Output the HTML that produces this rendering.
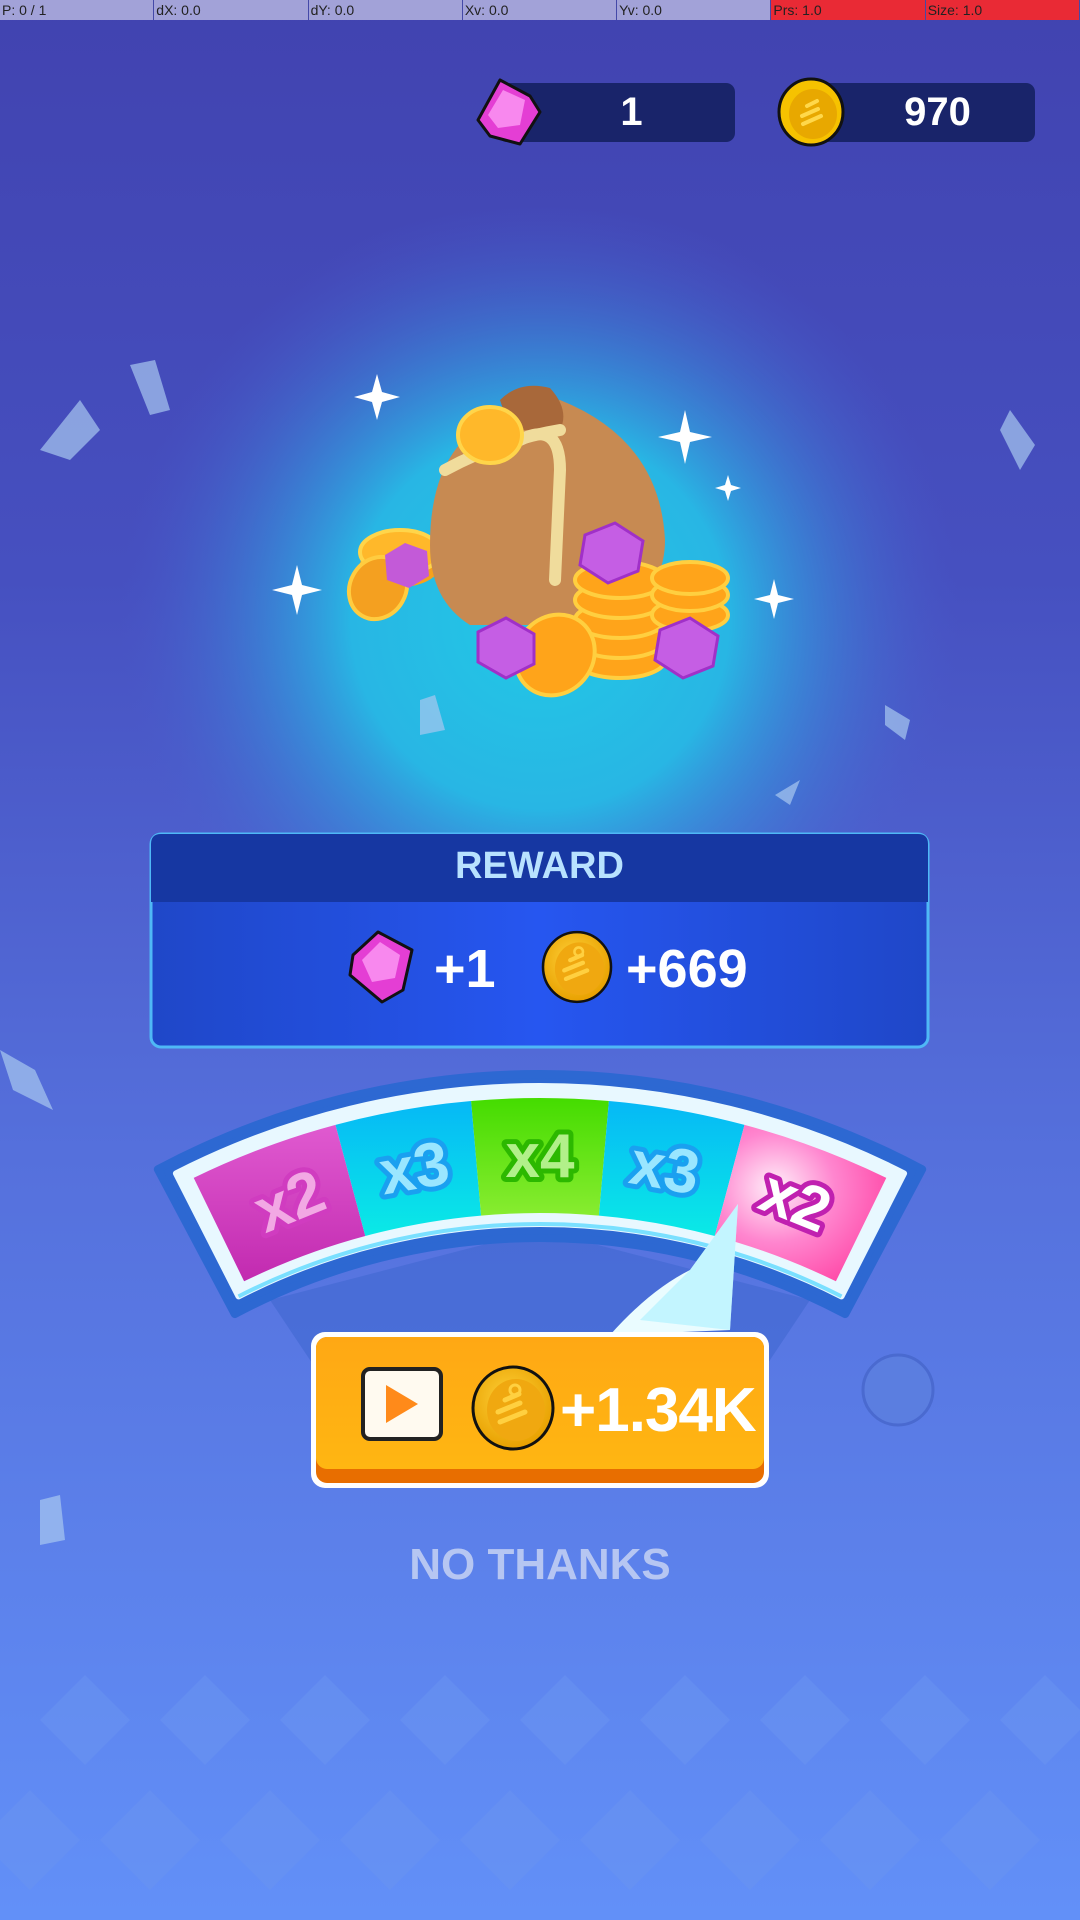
<!DOCTYPE html>
<html><head><meta charset="utf-8"><style>
*{margin:0;padding:0;box-sizing:border-box}
body{width:1080px;height:1920px;overflow:hidden;font-family:"Liberation Sans",sans-serif;background:linear-gradient(180deg,#4143b0 0%,#4650c0 30%,#5570dc 60%,#6290f8 100%);position:relative}
.abs{position:absolute}
.topbar{top:0;left:0;width:1080px;height:20px;display:flex;font-size:14px;color:#222}
.topbar div{flex:1;background:#a2a2d8;border-right:1px solid #4449a8;padding-left:2px;line-height:20px;font-family:"Liberation Sans Narrow","Liberation Sans",sans-serif}
.topbar div.r{background:#e92a35}
.cnt{background:#19246a;border-radius:9px;height:59px;top:83px;color:#fff;font-weight:bold;font-size:40px;line-height:59px;text-align:center}
</style></head><body>
<svg class="abs" style="left:0;top:0" width="1080" height="1920" viewBox="0 0 1080 1920">
<defs>
<radialGradient id="glow" cx="540" cy="620" r="420" gradientUnits="userSpaceOnUse">
<stop offset="0" stop-color="#22c8e6"/><stop offset=".45" stop-color="#28b6e4"/><stop offset="1" stop-color="#4a5cd0" stop-opacity="0"/></radialGradient>
<linearGradient id="panel" x1="0" y1="0" x2="1" y2="0"><stop offset="0" stop-color="#1f47c8"/><stop offset=".5" stop-color="#2656f0"/><stop offset="1" stop-color="#1f47c8"/></linearGradient>
<linearGradient id="btn" x1="0" y1="0" x2="0" y2="1"><stop offset="0" stop-color="#ffa814"/><stop offset="1" stop-color="#ffb612"/></linearGradient>
<radialGradient id="coin" cx=".45" cy=".4" r=".6"><stop offset="0" stop-color="#ffd23a"/><stop offset="1" stop-color="#e8a000"/></radialGradient>
<linearGradient id="pinkL" x1="0" y1="0" x2="0" y2="1"><stop offset="0" stop-color="#e05ad0"/><stop offset="1" stop-color="#c22ab0"/></linearGradient>
<radialGradient id="pinkR" cx=".35" cy=".4" r=".7"><stop offset="0" stop-color="#fff0fa"/><stop offset=".5" stop-color="#ff86cf"/><stop offset="1" stop-color="#ff4aa8"/></radialGradient>
<linearGradient id="cy" x1="0" y1="0" x2="0" y2="1"><stop offset="0" stop-color="#06b8f6"/><stop offset="1" stop-color="#0aeae6"/></linearGradient>
<linearGradient id="gr" x1="0" y1="0" x2="0" y2="1"><stop offset="0" stop-color="#44dc00"/><stop offset="1" stop-color="#88ec30"/></linearGradient>
</defs>
<circle cx="540" cy="600" r="430" fill="url(#glow)"/>
<g fill="#6a94f0" opacity=".55">
<path d="M40 1720l45-45 45 45-45 45z M160 1720l45-45 45 45-45 45z M280 1720l45-45 45 45-45 45z M400 1720l45-45 45 45-45 45z M520 1720l45-45 45 45-45 45z M640 1720l45-45 45 45-45 45z M760 1720l45-45 45 45-45 45z M880 1720l45-45 45 45-45 45z M1000 1720l45-45 45 45-45 45z"/>
<path d="M100 1840l50-50 50 50-50 50z M220 1840l50-50 50 50-50 50z M340 1840l50-50 50 50-50 50z M460 1840l50-50 50 50-50 50z M580 1840l50-50 50 50-50 50z M700 1840l50-50 50 50-50 50z M820 1840l50-50 50 50-50 50z M940 1840l50-50 50 50-50 50z M-20 1840l50-50 50 50-50 50z"/>
</g>
<g fill="#a8c8f0" opacity=".7">
<path d="M40 450l40-50 20 30-30 30z"/><path d="M130 365l25-5 15 50-20 5z"/><path d="M1010 410l25 35-15 25-20-40z"/><path d="M0 1050l35 20 18 40-40-20z"/><path d="M420 700l15-5 10 35-25 5z"/><path d="M885 705l25 15-5 20-20-15z"/><path d="M800 780l-25 15 15 10z"/><path d="M40 1500l20-5 5 45-25 5z"/>
</g>
<g fill="#fff">
<path d="M372 392l5 -18 5 18 18 5-18 5-5 18-5-18-18-5z"/>
<path d="M680 432l5 -22 5 22 22 5-22 5-5 22-5-22-22-5z"/>
<path d="M292 585l5 -20 5 20 20 5-20 5-5 20-5-20-20-5z"/>
<path d="M770 595l4 -16 4 16 16 4-16 4-4 16-4-16-16-4z"/>
<path d="M725 485l3 -10 3 10 10 3-10 3-3 10-3-10-10-3z"/>
</g>
<!-- bag -->
<ellipse cx="400" cy="565" rx="40" ry="22" fill="#f6a21c"/>
<ellipse cx="400" cy="552" rx="40" ry="22" fill="#ffb82a" stroke="#ffd54a" stroke-width="4"/>
<path d="M430 545 Q430 430 520 410 L560 400 Q660 440 665 540 Q665 600 600 625 L470 625 Q430 600 430 545z" fill="#c78a52"/>
<path d="M500 400 Q520 380 550 388 Q570 410 560 430 L510 430z" fill="#a8683a"/>
<path d="M520 440 Q560 420 560 470 L555 580" stroke="#f0dc9c" stroke-width="12" fill="none" stroke-linecap="round"/>
<path d="M445 470 Q500 440 560 430" stroke="#f0dc9c" stroke-width="12" fill="none" stroke-linecap="round"/>
<ellipse cx="490" cy="435" rx="32" ry="28" fill="#ffb82a" stroke="#ffd54a" stroke-width="4"/>
<ellipse cx="378" cy="588" rx="28" ry="32" fill="#f4a020" stroke="#ffcc40" stroke-width="4" transform="rotate(30 378 588)"/>
<path d="M385 555l20-12 22 8 2 25-20 12-22-8z" fill="#c35ad8"/>
<g fill="#ffa41a" stroke="#ffcf40" stroke-width="4">
<ellipse cx="620" cy="660" rx="45" ry="18"/><ellipse cx="620" cy="640" rx="45" ry="18"/><ellipse cx="620" cy="620" rx="45" ry="18"/><ellipse cx="620" cy="600" rx="45" ry="18"/><ellipse cx="620" cy="580" rx="45" ry="18"/>
<ellipse cx="690" cy="615" rx="38" ry="16"/><ellipse cx="690" cy="595" rx="38" ry="16"/><ellipse cx="690" cy="578" rx="38" ry="16"/>
</g>
<ellipse cx="555" cy="655" rx="38" ry="42" fill="#ffa41a" stroke="#ffcf40" stroke-width="4" transform="rotate(40 555 655)"/>
<g fill="#c55ee4" stroke="#a030c8" stroke-width="3">
<path d="M585 535l30-12 28 18-5 30-30 12-28-18z"/>
<path d="M478 632l28-14 28 16 0 30-28 14-28-16z"/>
<path d="M660 630l30-12 28 18-5 30-30 12-28-18z"/>
</g>
<!-- reward panel -->
<rect x="151" y="834" width="777" height="213" rx="10" fill="url(#panel)" stroke="#4fb8f6" stroke-width="3"/>
<path d="M161 834 H918 Q928 834 928 844 V902 H151 V844 Q151 834 161 834z" fill="#1637a2"/>
<!-- arc shadow -->
<path d="M270 1300 L540 1230 L810 1300 L690 1480 L390 1480z" fill="#3f68d0" opacity=".6"/>
<!-- arc -->
<path d="M157.8 1169.3 A814 814 0 0 1 922.2 1169.3 L845.2 1314.1 A650 650 0 0 0 234.8 1314.1 Z" fill="#2d68d2" stroke="#2d68d2" stroke-width="8" stroke-linejoin="round"/>
<path d="M175.9 1173.4 A802 802 0 0 1 904.1 1173.4 L841.5 1296.4 A664 664 0 0 0 238.5 1296.4 Z" fill="#e8f8ff" stroke="#e8f8ff" stroke-width="6" stroke-linejoin="round"/>
<path d="M193.7 1177.9 A790 790 0 0 1 335.5 1124.9 L365.3 1236 A675 675 0 0 0 244.1 1281.3Z" fill="url(#pinkL)"/>
<path d="M335.5 1124.9 A790 790 0 0 1 471.1 1101 L481.1 1215.6 A675 675 0 0 0 365.3 1236Z" fill="url(#cy)"/>
<path d="M471.1 1101 A790 790 0 0 1 608.9 1101 L598.9 1215.6 A675 675 0 0 0 481.1 1215.6Z" fill="url(#gr)"/>
<path d="M608.9 1101 A790 790 0 0 1 744.5 1124.9 L714.7 1236 A675 675 0 0 0 598.9 1215.6Z" fill="url(#cy)"/>
<path d="M744.5 1124.9 A790 790 0 0 1 886.3 1177.9 L835.9 1281.3 A675 675 0 0 0 714.7 1236Z" fill="url(#pinkR)"/>
<path d="M238.5 1296.4 A664 664 0 0 1 841.5 1296.4" fill="none" stroke="#7ae0ff" stroke-width="4"/>
<g font-family="Liberation Sans,sans-serif" font-weight="bold" font-size="62" text-anchor="middle" stroke-width="10" paint-order="stroke" stroke-linejoin="round">
<text x="289" y="1222" transform="rotate(-22 289 1200)" fill="#f2a8e4" stroke="#d03cc0">x2</text>
<text x="414" y="1189" transform="rotate(-10 414 1167)" fill="#9ae6ff" stroke="#1aa0f0">x3</text>
<text x="540" y="1177" fill="#b2f08a" stroke="#2cb800">x4</text>
<text x="665" y="1189" transform="rotate(10 665 1167)" fill="#9ae6ff" stroke="#1aa0f0">x3</text>
<text x="796" y="1222" transform="rotate(22 796 1200)" fill="#fff" stroke="#c020b0">x2</text>
</g>
<!-- needle -->
<path d="M738 1204 L730 1330 L610 1335 Q650 1290 690 1270z" fill="#eafcff"/>
<path d="M738 1204 L690 1270 L640 1320 L730 1330z" fill="#a8f0ff" opacity=".6"/>
<circle cx="898" cy="1390" r="35" fill="#5b7ee0" stroke="#4a6ad0" stroke-width="3"/>
<!-- button -->
<rect x="311" y="1332" width="458" height="156" rx="14" fill="#fff"/>
<rect x="316" y="1337" width="448" height="146" rx="11" fill="#e86e00"/>
<rect x="316" y="1337" width="448" height="132" rx="11" fill="url(#btn)"/>
<rect x="363" y="1369" width="78" height="70" rx="7" fill="#fffaf0" stroke="#222" stroke-width="4"/>
<path d="M386 1385 L418 1404 L386 1423z" fill="#ff8a1a"/>
<!-- button coin -->
<ellipse cx="513" cy="1408" rx="40" ry="41" fill="url(#coin)" stroke="#111" stroke-width="3"/>
<ellipse cx="516" cy="1410" rx="29" ry="31" fill="#f0a810"/>
<path d="M500 1422 l25 -10 M498 1412 l22 -9 M505 1400 l14 -6" stroke="#ffd040" stroke-width="5" stroke-linecap="round"/>
<circle cx="515" cy="1390" r="5" fill="none" stroke="#ffd040" stroke-width="3"/>
<!-- reward coin -->
<g transform="translate(577 967) scale(0.85) translate(-513 -1408)">
<ellipse cx="513" cy="1408" rx="40" ry="41" fill="url(#coin)" stroke="#111" stroke-width="3"/>
<ellipse cx="516" cy="1410" rx="29" ry="31" fill="#f0a810"/>
<path d="M500 1422 l25 -10 M498 1412 l22 -9 M505 1400 l14 -6" stroke="#ffd040" stroke-width="5" stroke-linecap="round"/>
<circle cx="515" cy="1390" r="5" fill="none" stroke="#ffd040" stroke-width="3"/>
</g>
<!-- reward gem -->
<path d="M353 955 L378 932 L412 950 L403 990 L382 1002 L350 975z" fill="#e43ed4" stroke="#111" stroke-width="3" stroke-linejoin="round"/>
<path d="M362 960 L380 942 L400 955 L395 978 L372 982z" fill="#f888ee"/>
</svg>
<div class="abs topbar"><div>P: 0 / 1</div><div>dX: 0.0</div><div>dY: 0.0</div><div>Xv: 0.0</div><div>Yv: 0.0</div><div class="r">Prs: 1.0</div><div class="r">Size: 1.0</div></div>
<div class="abs cnt" style="left:498px;width:237px;padding-left:30px">1</div>
<div class="abs cnt" style="left:800px;width:235px;padding-left:40px">970</div>
<svg class="abs" style="left:470px;top:75px" width="80" height="75" viewBox="470 75 80 75">
<path d="M478 120 L500 80 L530 96 L540 112 L520 144 L490 136z" fill="#e43ed4" stroke="#111" stroke-width="3" stroke-linejoin="round"/>
<path d="M488 115 L503 90 L525 100 L520 125 L498 128z" fill="#f888ee"/>
</svg>
<svg class="abs" style="left:775px;top:76px" width="72" height="72" viewBox="0 0 72 72">
<ellipse cx="36" cy="36" rx="32" ry="33" fill="#f6c200" stroke="#111" stroke-width="3"/>
<ellipse cx="38" cy="38" rx="24" ry="25" fill="#e8a800"/>
<path d="M28 48 l18-8 M27 40 l16-7 M32 30 l10-5" stroke="#ffd84a" stroke-width="4" stroke-linecap="round"/>
</svg>
<div class="abs" style="left:151px;width:777px;top:838px;text-align:center;font-weight:bold;font-size:38px;color:#b8e2ff;line-height:56px">REWARD</div>
<div class="abs" style="left:434px;top:938px;font-weight:bold;font-size:54px;color:#fff">+1</div>
<div class="abs" style="left:626px;top:938px;font-weight:bold;font-size:54px;color:#fff">+669</div>
<div class="abs" style="left:560px;top:1375px;font-weight:bold;font-size:62px;color:#fff;letter-spacing:-1px">+1.34K</div>
<div class="abs" style="left:0;width:1080px;top:1540px;text-align:center;font-weight:bold;font-size:44px;color:#b6c6f2">NO THANKS</div>
</body></html>
